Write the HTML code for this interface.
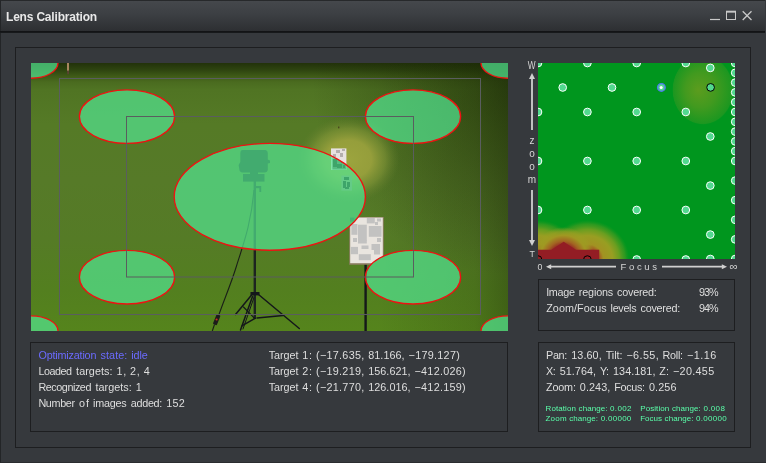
<!DOCTYPE html>
<html lang="en"><head><meta charset="utf-8"><title>Lens Calibration</title>
<style>
html,body{margin:0;padding:0;}
body{width:766px;height:463px;overflow:hidden;background:#36393d;font-family:"Liberation Sans",sans-serif;position:relative;}
.abs{position:absolute;display:block;}
#win{left:0;top:0;width:766px;height:463px;box-sizing:border-box;border-left:1px solid #232527;border-bottom:1px solid #2a2c2f;background:#36393d;}
#title{left:0;top:0;width:765px;height:31px;background:linear-gradient(#45484c 0,#3c3f43 45%,#2d2f32 100%);border-top:1px solid #27292b;box-sizing:border-box;border-left:1px solid #232527;}
#tline{left:0;top:31px;width:765px;height:2px;background:linear-gradient(#131416 0,#131416 50%,#17191b 50%,#17191b 100%);}
#title span{position:absolute;left:5px;top:8px;font-weight:bold;font-size:12px;line-height:16px;color:#e8e8e8;letter-spacing:-0.19px;white-space:nowrap;}
.box{box-sizing:border-box;border:1px solid #1d1e20;background:#36393d;}
svg.txt{will-change:transform;}
#title span{will-change:transform;}
svg.txt text{font-family:"Liberation Sans",sans-serif;font-size:10.8px;fill:#dedede;}
svg.txt text.b{fill:#6b6bff;}
svg.txt text.g{fill:#5affaa;font-size:8px;}
svg.txt text.ax{font-size:10px;fill:#d6d6d6;}
</style></head><body>
<div id="win" class="abs"></div>
<div id="title" class="abs"><span>Lens Calibration</span></div>
<div id="tline" class="abs"></div>
<svg class="abs" style="left:706px;top:8px" width="50" height="16" viewBox="706 8 50 16">
<g stroke="#c9c9c9" fill="none">
<line x1="710" y1="19.5" x2="720" y2="19.5" stroke-width="1.2"/>
<rect x="726.5" y="12" width="9" height="7.5" stroke-width="1"/><line x1="726" y1="11.5" x2="736" y2="11.5" stroke-width="1.6"/>
<path d="M742.7 11.3 L751.5 20 M751.5 11.3 L742.7 20" stroke-width="1.3"/>
</g></svg>
<div class="abs box" style="left:15px;top:47px;width:736px;height:401px"></div>
<div class="abs box" style="left:30px;top:342px;width:478px;height:90px"></div>
<div class="abs box" style="left:538px;top:279px;width:197px;height:52px"></div>
<div class="abs box" style="left:538px;top:342px;width:197px;height:90px"></div>
<svg class="abs" style="left:31px;top:63px" width="477" height="268" viewBox="31 63 477 268">
<defs>
<linearGradient id="bgv" x1="0" y1="0" x2="0" y2="1">
<stop offset="0" stop-color="#22320a"/><stop offset="0.026" stop-color="#2e4410"/><stop offset="0.0485" stop-color="#3e5a17"/><stop offset="0.071" stop-color="#4a6b1f"/><stop offset="0.1" stop-color="#507423"/><stop offset="0.228" stop-color="#557a26"/><stop offset="0.437" stop-color="#567a28"/><stop offset="0.66" stop-color="#557b26"/><stop offset="0.847" stop-color="#537f1f"/><stop offset="1" stop-color="#55841c"/>
</linearGradient>
<linearGradient id="bgh" x1="0" y1="0" x2="1" y2="0"><stop offset="0" stop-color="#141e04" stop-opacity="0"/><stop offset="0.73" stop-color="#141e04" stop-opacity="0"/><stop offset="0.93" stop-color="#141e04" stop-opacity="0.14"/><stop offset="1" stop-color="#141e04" stop-opacity="0.32"/></linearGradient>
<radialGradient id="spot" cx="0.5" cy="0.5" r="0.5">
<stop offset="0" stop-color="#9ca43e" stop-opacity="1"/><stop offset="0.45" stop-color="#98a03c" stop-opacity="0.96"/><stop offset="0.72" stop-color="#8a9a3a" stop-opacity="0.55"/><stop offset="1" stop-color="#6a8030" stop-opacity="0"/>
</radialGradient>
<clipPath id="cel"><ellipse cx="269.8" cy="196.8" rx="95.6" ry="53.4"/></clipPath>
<clipPath id="cel2"><ellipse cx="413" cy="277.2" rx="47.6" ry="26.8"/></clipPath>
<radialGradient id="dark" cx="0.5" cy="0.5" r="0.5">
<stop offset="0" stop-color="#1c2c06" stop-opacity="0.62"/><stop offset="0.5" stop-color="#1c2c06" stop-opacity="0.3"/><stop offset="1" stop-color="#1c2c06" stop-opacity="0"/>
</radialGradient>
<pattern id="mk" width="6" height="6" patternUnits="userSpaceOnUse">
<rect width="6" height="6" fill="#d8d8d6"/><rect x="0" y="0" width="3" height="2" fill="#b0b0ae"/><rect x="3" y="3" width="2" height="3" fill="#bcbcba"/><rect x="1" y="4" width="2" height="1" fill="#c4c4c2"/>
</pattern>
</defs>
<rect x="31" y="63" width="477" height="268" fill="url(#bgv)"/>
<ellipse cx="512" cy="85" rx="200" ry="190" fill="url(#dark)"/>
<rect x="31" y="63" width="477" height="268" fill="url(#bgh)"/>
<ellipse cx="348.5" cy="159.5" rx="51" ry="43" fill="url(#spot)"/>
<rect x="338" y="126.5" width="1.4" height="1.8" fill="#4a4a20"/>
<rect x="67" y="63" width="2" height="8" fill="#a88660"/><rect x="67.2" y="70.5" width="1.8" height="3.8" fill="#5a4232"/>
<g fill="#1d2420">
<path d="M242.5 150 L265.5 150 Q267.8 150.5 267.8 153 L267.8 159.5 L270 160.5 L270 163 L267.8 163.5 L267.8 170 Q267.5 172.4 265 172.4 L242 172.4 Q239.3 172 239.3 169 L238.6 165 L240.3 162 L240.3 153 Q240.5 150 242.5 150 Z"/>
<rect x="243" y="174" width="21.5" height="7.6"/>
<rect x="250" y="172" width="8" height="3"/>
<rect x="253.6" y="181" width="2.4" height="138"/>
<rect x="255" y="186" width="6" height="2.2"/><rect x="259.4" y="186" width="1.8" height="6"/>
</g>
<g stroke="#14171a" fill="none" stroke-width="1.5" stroke-linecap="round">
<path d="M252 294.5 L235.5 314.5"/><path d="M258.5 294.5 L299.3 328.5"/><path d="M252.5 296.5 L240.5 330"/><path d="M254 297.5 L243 329" stroke-width="1"/>
<path d="M257 318 L283 315.4"/><path d="M255 318.4 L242.3 325.6"/><path d="M243.5 307 L254.6 318.4" stroke-width="1.1"/>
</g>
<rect x="250.5" y="292" width="9" height="3.4" fill="#14171a"/>
<path d="M254 190 C 251 225, 243 245, 236.5 266 C 231 284, 224 300, 219 314.5" stroke="#1a1f18" stroke-width="1.1" fill="none"/>
<path d="M214.5 324.5 L212.3 331" stroke="#1a1f18" stroke-width="1.1" fill="none"/>
<rect x="214.6" y="314.5" width="4.2" height="10.5" rx="1" fill="#1c1c1a" transform="rotate(22 216.7 319.7)"/>
<circle cx="216.6" cy="319.5" r="1.1" fill="#d02a20"/>
<rect x="331" y="148.4" width="15.4" height="21.6" fill="#e8e2e2"/>
<g fill="#b4aeae"><rect x="336" y="150" width="4" height="3"/><rect x="340" y="153" width="3" height="4"/><rect x="333" y="154" width="3" height="3"/><rect x="342" y="149" width="3" height="2"/></g>
<g fill="#101010" clip-path="url(#cel)"><rect x="332.4" y="158.5" width="13.6" height="11" fill="#60605c"/><rect x="333" y="159" width="4" height="8"/><rect x="337" y="164" width="5" height="4"/><rect x="341" y="160" width="3" height="3"/><rect x="343" y="165" width="2" height="3"/></g>
<rect x="341.4" y="175.6" width="10.6" height="15" fill="#8e8e70"/>
<g fill="#101010"><rect x="344" y="177" width="5" height="3"/><rect x="343" y="181" width="3" height="7"/><rect x="347" y="182" width="3" height="5"/><rect x="345" y="187" width="4" height="2"/></g>
<rect x="364.4" y="262" width="2.4" height="69" fill="#15181a"/>
<rect x="349.2" y="217" width="34.6" height="47.8" fill="#8c7e62"/>
<rect x="350.2" y="217.6" width="32.6" height="45.6" fill="#e9e5df"/>
<g fill="#c2c2c1">
<rect x="351.4" y="224" width="6" height="10.8"/>
<rect x="358" y="224.7" width="8.8" height="16"/>
<rect x="366.8" y="218" width="8" height="5.4"/>
<rect x="377" y="218.5" width="4" height="3"/>
<rect x="375" y="222" width="3" height="3"/>
<rect x="368.8" y="226" width="12.7" height="10.8"/>
<rect x="350.7" y="246.9" width="7.3" height="7.3"/>
<rect x="358" y="240" width="8.8" height="3.5"/>
<rect x="358.8" y="254.2" width="12" height="6"/>
<rect x="371.5" y="244" width="8.5" height="6"/>
<rect x="374" y="250" width="6" height="4.5"/>
<rect x="361.5" y="245.5" width="7" height="3.5"/>
<rect x="353" y="238" width="4" height="4"/>
<rect x="377" y="238" width="4" height="4"/>
</g>
<g clip-path="url(#cel)"><rect x="348" y="216" width="14" height="14" fill="#557a26"/><rect x="350" y="217.6" width="4.5" height="4" fill="#1c4a2a"/></g>
<g clip-path="url(#cel2)"><rect x="362" y="248" width="24" height="20" fill="#547d24"/></g>
<ellipse cx="127" cy="116.6" rx="47.6" ry="26.8" fill="#52e592" fill-opacity="0.7" stroke="#ee1212" stroke-width="1.35"/>
<ellipse cx="413" cy="116.6" rx="47.6" ry="26.8" fill="#52e592" fill-opacity="0.7" stroke="#ee1212" stroke-width="1.35"/>
<ellipse cx="127" cy="277.2" rx="47.6" ry="26.8" fill="#52e592" fill-opacity="0.7" stroke="#ee1212" stroke-width="1.35"/>
<ellipse cx="413" cy="277.2" rx="47.6" ry="26.8" fill="#52e592" fill-opacity="0.7" stroke="#ee1212" stroke-width="1.35"/>
<ellipse cx="269.8" cy="196.8" rx="95.6" ry="53.4" fill="#52e592" fill-opacity="0.7" stroke="#ee1212" stroke-width="1.35"/>
<ellipse cx="31" cy="63" rx="27" ry="15.2" fill="#52e592" fill-opacity="0.7" stroke="#ee1212" stroke-width="1.35"/>
<ellipse cx="508" cy="63" rx="27" ry="15.2" fill="#52e592" fill-opacity="0.7" stroke="#ee1212" stroke-width="1.35"/>
<ellipse cx="31" cy="331" rx="27" ry="15.2" fill="#52e592" fill-opacity="0.7" stroke="#ee1212" stroke-width="1.35"/>
<ellipse cx="508" cy="331" rx="27" ry="15.2" fill="#52e592" fill-opacity="0.7" stroke="#ee1212" stroke-width="1.35"/>
<rect x="59.5" y="78.5" width="421" height="236" fill="none" stroke="#5a5d5f" stroke-width="1"/>
<rect x="126.5" y="116.5" width="287" height="160.5" fill="none" stroke="#5a5d5f" stroke-width="1"/>
</svg>
<svg class="abs" style="left:538px;top:63px" width="197" height="196" viewBox="538 63 197 196">
<defs>
<radialGradient id="gb" cx="0.5" cy="0.5" r="0.5" fx="0.42" fy="0.5">
<stop offset="0" stop-color="#5c9c1e"/><stop offset="0.5" stop-color="#429a1f"/><stop offset="0.96" stop-color="#1c9720"/><stop offset="1" stop-color="#00961e" stop-opacity="0"/>
</radialGradient>
<radialGradient id="gy" cx="0.5" cy="0.5" r="0.5">
<stop offset="0" stop-color="#931d24"/><stop offset="0.23" stop-color="#931d24"/><stop offset="0.29" stop-color="#a25c22"/><stop offset="0.38" stop-color="#a29222"/><stop offset="0.6" stop-color="#989e22"/><stop offset="0.76" stop-color="#6a9e20"/><stop offset="0.9" stop-color="#3a9a20" stop-opacity="0.75"/><stop offset="1" stop-color="#1a9820" stop-opacity="0"/>
</radialGradient>
<radialGradient id="gm" cx="0.5" cy="0.5" r="0.5">
<stop offset="0" stop-color="#931d24"/><stop offset="0.40" stop-color="#931d24"/><stop offset="0.56" stop-color="#a26422"/><stop offset="0.74" stop-color="#a09822"/><stop offset="0.86" stop-color="#9c9e22" stop-opacity="0.7"/><stop offset="1" stop-color="#9c9e22" stop-opacity="0"/>
</radialGradient>
</defs>
<rect x="538" y="63" width="197" height="196" fill="#00961e"/>
<ellipse cx="703" cy="90" rx="31" ry="35" fill="url(#gb)"/>
<ellipse cx="538" cy="259" rx="42" ry="39" fill="url(#gy)"/>
<ellipse cx="587.4" cy="259" rx="42" ry="39" fill="url(#gy)"/>
<circle cx="563.5" cy="259" r="32" fill="url(#gm)"/>
<polygon points="538,249.7 551.4,249.7 563.7,241.8 576,249.7 599.2,249.7 599.2,259 538,259" fill="#931d24"/>
<circle cx="538.0" cy="63.0" r="3.85" fill="#52d98f" stroke="#ffffff" stroke-width="1.0"/>
<circle cx="587.4" cy="63.0" r="3.85" fill="#52d98f" stroke="#ffffff" stroke-width="1.0"/>
<circle cx="636.7" cy="63.0" r="3.85" fill="#52d98f" stroke="#ffffff" stroke-width="1.0"/>
<circle cx="685.8" cy="63.0" r="3.85" fill="#52d98f" stroke="#ffffff" stroke-width="1.0"/>
<circle cx="538.0" cy="112.0" r="3.85" fill="#52d98f" stroke="#ffffff" stroke-width="1.0"/>
<circle cx="587.4" cy="112.0" r="3.85" fill="#52d98f" stroke="#ffffff" stroke-width="1.0"/>
<circle cx="636.7" cy="112.0" r="3.85" fill="#52d98f" stroke="#ffffff" stroke-width="1.0"/>
<circle cx="685.8" cy="112.0" r="3.85" fill="#52d98f" stroke="#ffffff" stroke-width="1.0"/>
<circle cx="538.0" cy="161.0" r="3.85" fill="#52d98f" stroke="#ffffff" stroke-width="1.0"/>
<circle cx="587.4" cy="161.0" r="3.85" fill="#52d98f" stroke="#ffffff" stroke-width="1.0"/>
<circle cx="636.7" cy="161.0" r="3.85" fill="#52d98f" stroke="#ffffff" stroke-width="1.0"/>
<circle cx="685.8" cy="161.0" r="3.85" fill="#52d98f" stroke="#ffffff" stroke-width="1.0"/>
<circle cx="538.0" cy="210.0" r="3.85" fill="#52d98f" stroke="#ffffff" stroke-width="1.0"/>
<circle cx="587.4" cy="210.0" r="3.85" fill="#52d98f" stroke="#ffffff" stroke-width="1.0"/>
<circle cx="636.7" cy="210.0" r="3.85" fill="#52d98f" stroke="#ffffff" stroke-width="1.0"/>
<circle cx="685.8" cy="210.0" r="3.85" fill="#52d98f" stroke="#ffffff" stroke-width="1.0"/>
<circle cx="538.0" cy="259.6" r="3.85" fill="#931d24" stroke="#000000" stroke-width="1.0"/>
<circle cx="587.4" cy="259.6" r="3.85" fill="#931d24" stroke="#000000" stroke-width="1.0"/>
<circle cx="636.7" cy="259.5" r="3.85" fill="#52d98f" stroke="#ffffff" stroke-width="1.0"/>
<circle cx="685.8" cy="259.5" r="3.85" fill="#52d98f" stroke="#ffffff" stroke-width="1.0"/>
<circle cx="562.7" cy="87.5" r="3.85" fill="#52d98f" stroke="#ffffff" stroke-width="1.0"/>
<circle cx="612.0" cy="87.5" r="3.85" fill="#52d98f" stroke="#ffffff" stroke-width="1.0"/>
<circle cx="661.4" cy="87.4" r="3.8" fill="#52d98f" stroke="#4f78f2" stroke-width="1.4"/><circle cx="661.2" cy="87.6" r="1.5" fill="#ffffff"/>
<circle cx="710.3" cy="67.9" r="3.85" fill="#52d98f" stroke="#ffffff" stroke-width="1.0"/>
<circle cx="710.3" cy="136.5" r="3.85" fill="#52d98f" stroke="#ffffff" stroke-width="1.0"/>
<circle cx="710.3" cy="185.6" r="3.85" fill="#52d98f" stroke="#ffffff" stroke-width="1.0"/>
<circle cx="710.3" cy="234.6" r="3.85" fill="#52d98f" stroke="#ffffff" stroke-width="1.0"/>
<circle cx="710.3" cy="259.0" r="3.85" fill="#52d98f" stroke="#ffffff" stroke-width="1.0"/>
<circle cx="710.6" cy="87.4" r="3.85" fill="#52d98f" stroke="#000000" stroke-width="1.0"/>
<circle cx="735.2" cy="63.0" r="3.85" fill="#52d98f" stroke="#ffffff" stroke-width="1.0"/>
<circle cx="735.2" cy="72.8" r="3.85" fill="#52d98f" stroke="#ffffff" stroke-width="1.0"/>
<circle cx="735.2" cy="82.6" r="3.85" fill="#52d98f" stroke="#ffffff" stroke-width="1.0"/>
<circle cx="735.2" cy="92.4" r="3.85" fill="#52d98f" stroke="#ffffff" stroke-width="1.0"/>
<circle cx="735.2" cy="102.2" r="3.85" fill="#52d98f" stroke="#ffffff" stroke-width="1.0"/>
<circle cx="735.2" cy="112.0" r="3.85" fill="#52d98f" stroke="#ffffff" stroke-width="1.0"/>
<circle cx="735.2" cy="121.8" r="3.85" fill="#52d98f" stroke="#ffffff" stroke-width="1.0"/>
<circle cx="735.2" cy="131.6" r="3.85" fill="#52d98f" stroke="#ffffff" stroke-width="1.0"/>
<circle cx="735.2" cy="141.4" r="3.85" fill="#52d98f" stroke="#ffffff" stroke-width="1.0"/>
<circle cx="735.2" cy="151.2" r="3.85" fill="#52d98f" stroke="#ffffff" stroke-width="1.0"/>
<circle cx="735.2" cy="161.0" r="3.85" fill="#52d98f" stroke="#ffffff" stroke-width="1.0"/>
<circle cx="735.2" cy="180.6" r="3.85" fill="#52d98f" stroke="#ffffff" stroke-width="1.0"/>
<circle cx="735.2" cy="200.2" r="3.85" fill="#52d98f" stroke="#ffffff" stroke-width="1.0"/>
<circle cx="735.2" cy="219.8" r="3.85" fill="#52d98f" stroke="#ffffff" stroke-width="1.0"/>
<circle cx="735.2" cy="239.4" r="3.85" fill="#52d98f" stroke="#ffffff" stroke-width="1.0"/>
<circle cx="735.2" cy="259.0" r="3.85" fill="#52d98f" stroke="#ffffff" stroke-width="1.0"/>
</svg>
<svg class="abs txt" style="left:0;top:0" width="766" height="463" viewBox="0 0 766 463">
<text y="358.8" class="b"><tspan x="38.41" textLength="58.06" lengthAdjust="spacing">Optimization</tspan> <tspan x="100.42" textLength="26.91" lengthAdjust="spacing">state:</tspan> <tspan x="131.28" textLength="16.52" lengthAdjust="spacing">idle</tspan></text>
<text y="374.8"><tspan x="38.41" textLength="33.73" lengthAdjust="spacing">Loaded</tspan> <tspan x="76.09" textLength="36.40" lengthAdjust="spacing">targets:</tspan> <tspan x="116.44" textLength="9.70" lengthAdjust="spacing">1,</tspan> <tspan x="130.09" textLength="9.70" lengthAdjust="spacing">2,</tspan> <tspan x="143.74" textLength="6.73" lengthAdjust="spacing">4</tspan></text>
<text y="390.8"><tspan x="38.41" textLength="53.02" lengthAdjust="spacing">Recognized</tspan> <tspan x="95.38" textLength="36.40" lengthAdjust="spacing">targets:</tspan> <tspan x="135.73" textLength="6.73" lengthAdjust="spacing">1</tspan></text>
<text y="406.7"><tspan x="38.41" textLength="36.70" lengthAdjust="spacing">Number</tspan> <tspan x="79.06" textLength="10.00" lengthAdjust="spacing">of</tspan> <tspan x="93.00" textLength="33.73" lengthAdjust="spacing">images</tspan> <tspan x="130.68" textLength="31.66" lengthAdjust="spacing">added:</tspan> <tspan x="166.29" textLength="18.60" lengthAdjust="spacing">152</tspan></text>
<text y="358.8"><tspan x="268.81" textLength="29.58" lengthAdjust="spacing">Target</tspan> <tspan x="302.34" textLength="9.70" lengthAdjust="spacing">1:</tspan> <tspan x="315.99" textLength="48.27" lengthAdjust="spacing">(−17.635,</tspan> <tspan x="368.20" textLength="36.40" lengthAdjust="spacing">81.166,</tspan> <tspan x="408.56" textLength="51.24" lengthAdjust="spacing">−179.127)</tspan></text>
<text y="374.8"><tspan x="268.81" textLength="29.58" lengthAdjust="spacing">Target</tspan> <tspan x="302.34" textLength="9.70" lengthAdjust="spacing">2:</tspan> <tspan x="315.99" textLength="48.27" lengthAdjust="spacing">(−19.219,</tspan> <tspan x="368.20" textLength="42.34" lengthAdjust="spacing">156.621,</tspan> <tspan x="414.49" textLength="51.24" lengthAdjust="spacing">−412.026)</tspan></text>
<text y="390.8"><tspan x="268.81" textLength="29.58" lengthAdjust="spacing">Target</tspan> <tspan x="302.34" textLength="9.70" lengthAdjust="spacing">4:</tspan> <tspan x="315.99" textLength="48.27" lengthAdjust="spacing">(−21.770,</tspan> <tspan x="368.20" textLength="42.34" lengthAdjust="spacing">126.016,</tspan> <tspan x="414.49" textLength="51.24" lengthAdjust="spacing">−412.159)</tspan></text>
<text y="295.9"><tspan x="546.21" textLength="28.69" lengthAdjust="spacing">Image</tspan> <tspan x="578.85" textLength="34.33" lengthAdjust="spacing">regions</tspan> <tspan x="617.12" textLength="39.67" lengthAdjust="spacing">covered:</tspan></text>
<text y="295.9"><tspan x="698.91" textLength="19.79" lengthAdjust="spacing">93%</tspan></text>
<text y="311.9"><tspan x="546.21" textLength="60.44" lengthAdjust="spacing">Zoom/Focus</tspan> <tspan x="610.59" textLength="26.02" lengthAdjust="spacing">levels</tspan> <tspan x="640.56" textLength="39.67" lengthAdjust="spacing">covered:</tspan></text>
<text y="311.9"><tspan x="698.91" textLength="19.79" lengthAdjust="spacing">94%</tspan></text>
<text y="358.8"><tspan x="546.01" textLength="21.27" lengthAdjust="spacing">Pan:</tspan> <tspan x="571.23" textLength="30.47" lengthAdjust="spacing">13.60,</tspan> <tspan x="605.65" textLength="16.82" lengthAdjust="spacing">Tilt:</tspan> <tspan x="626.42" textLength="32.25" lengthAdjust="spacing">−6.55,</tspan> <tspan x="662.61" textLength="20.38" lengthAdjust="spacing">Roll:</tspan> <tspan x="686.94" textLength="29.28" lengthAdjust="spacing">−1.16</tspan></text>
<text y="374.8"><tspan x="546.01" textLength="9.70" lengthAdjust="spacing">X:</tspan> <tspan x="559.66" textLength="36.40" lengthAdjust="spacing">51.764,</tspan> <tspan x="600.01" textLength="9.11" lengthAdjust="spacing">Y:</tspan> <tspan x="613.06" textLength="42.34" lengthAdjust="spacing">134.181,</tspan> <tspan x="659.35" textLength="9.70" lengthAdjust="spacing">Z:</tspan> <tspan x="673.00" textLength="41.15" lengthAdjust="spacing">−20.455</tspan></text>
<text y="390.8"><tspan x="546.01" textLength="29.88" lengthAdjust="spacing">Zoom:</tspan> <tspan x="579.83" textLength="30.47" lengthAdjust="spacing">0.243,</tspan> <tspan x="614.25" textLength="30.77" lengthAdjust="spacing">Focus:</tspan> <tspan x="648.97" textLength="27.50" lengthAdjust="spacing">0.256</tspan></text>
<text y="410.5" class="g"><tspan x="545.52" textLength="30.40" lengthAdjust="spacing">Rotation</tspan> <tspan x="578.58" textLength="28.80" lengthAdjust="spacing">change:</tspan> <tspan x="610.05" textLength="21.50" lengthAdjust="spacing">0.002</tspan></text>
<text y="410.5" class="g"><tspan x="640.22" textLength="29.03" lengthAdjust="spacing">Position</tspan> <tspan x="671.92" textLength="28.80" lengthAdjust="spacing">change:</tspan> <tspan x="703.38" textLength="21.50" lengthAdjust="spacing">0.008</tspan></text>
<text y="420.6" class="g"><tspan x="545.52" textLength="21.05" lengthAdjust="spacing">Zoom</tspan> <tspan x="569.24" textLength="28.80" lengthAdjust="spacing">change:</tspan> <tspan x="600.70" textLength="30.62" lengthAdjust="spacing">0.00000</tspan></text>
<text y="420.6" class="g"><tspan x="640.22" textLength="21.73" lengthAdjust="spacing">Focus</tspan> <tspan x="664.62" textLength="28.80" lengthAdjust="spacing">change:</tspan> <tspan x="696.08" textLength="30.62" lengthAdjust="spacing">0.00000</tspan></text>
<text x="527.8" y="69.4" class="ax" style="font-size:10.2px" textLength="7.8" lengthAdjust="spacingAndGlyphs">W</text>
<text class="ax" text-anchor="middle"><tspan x="532" y="143.5">z</tspan><tspan x="532" y="156.6">o</tspan><tspan x="532" y="169.6">o</tspan><tspan x="532" y="182.6">m</tspan></text>
<text x="532.2" y="257" class="ax" text-anchor="middle" style="font-size:8.8px">T</text>
<text x="537.6" y="269.8" class="ax" style="font-size:8.8px">0</text>
<text x="620.6" y="270" class="ax" style="font-size:9.5px" textLength="36.4" lengthAdjust="spacing">Focus</text>
<text x="729.4" y="270.2" class="ax" style="font-size:10.5px" textLength="8.2" lengthAdjust="spacingAndGlyphs">∞</text>
<g stroke="#d0d0d0" stroke-width="1.8" fill="#d0d0d0">
<line x1="532" y1="76" x2="532" y2="130"/><polygon points="532,73 529,79 535,79" stroke="none"/>
<line x1="532" y1="190" x2="532" y2="243"/><polygon points="532,246 529,240 535,240" stroke="none"/>
<line x1="549" y1="266.7" x2="616" y2="266.7"/><polygon points="546,266.7 551.2,264.2 551.2,269.2" stroke="none"/>
<line x1="662" y1="266.7" x2="724" y2="266.7"/><polygon points="727,266.7 721.8,264.2 721.8,269.2" stroke="none"/>
</g>
</svg>
</body></html>
